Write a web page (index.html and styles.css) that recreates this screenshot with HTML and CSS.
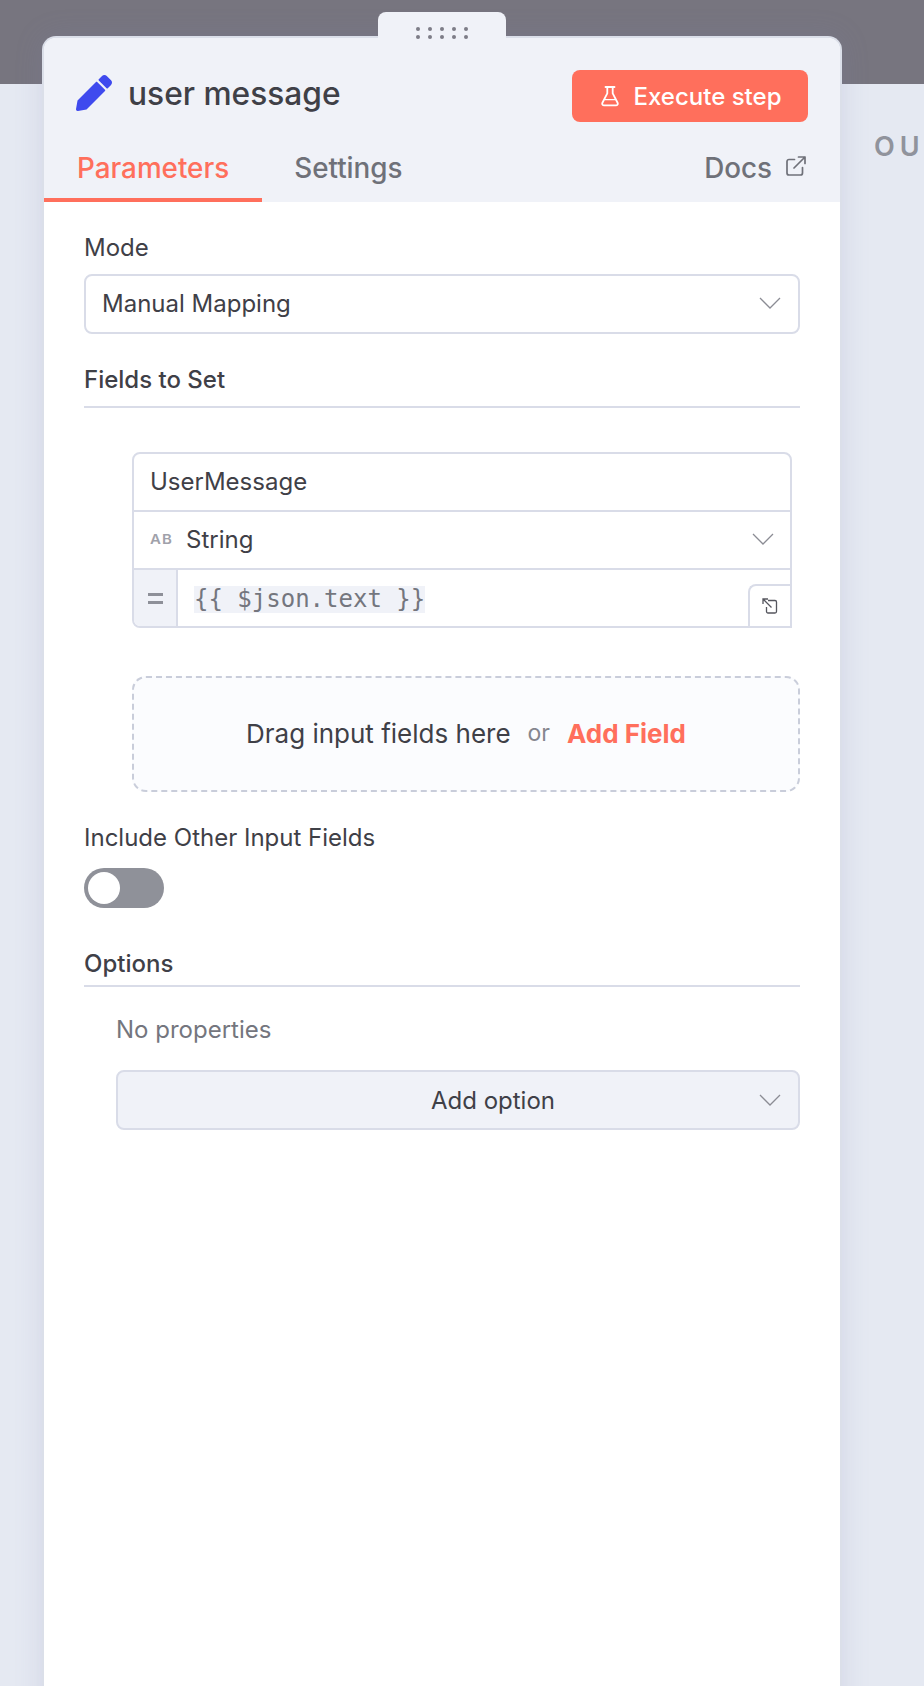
FILE: index.html
```html
<!DOCTYPE html>
<html lang="en">
<head>
<meta charset="utf-8">
<title>user message</title>
<link rel="stylesheet" href="styles.css">
</head>
<body>
<div class="scrim"></div>
<div class="stage"><span class="output-label">OU</span></div>

<section class="panel">
  <div class="handle">
    <svg class="handle-dots" width="52" height="14" viewBox="0 0 52 14"><g fill="#7d7d87"><circle cx="2" cy="3" r="2"/><circle cx="14" cy="3" r="2"/><circle cx="26" cy="3" r="2"/><circle cx="38" cy="3" r="2"/><circle cx="50" cy="3" r="2"/><circle cx="2" cy="11" r="2"/><circle cx="14" cy="11" r="2"/><circle cx="26" cy="11" r="2"/><circle cx="38" cy="11" r="2"/><circle cx="50" cy="11" r="2"/></g></svg>
  </div>
  <header class="head">
    <div class="title-row">
      <div class="title">
        <svg class="pencil" width="36" height="36" viewBox="0 0 512 512"><path fill="#3f4aee" d="M497.9 142.1l-46.1 46.1c-4.7 4.7-12.3 4.7-17 0l-111-111c-4.7-4.7-4.7-12.3 0-17l46.1-46.1c18.7-18.7 49.1-18.7 67.9 0l60.1 60.1c18.8 18.7 18.8 49.1 0 67.9zM284.2 99.8L21.6 362.4.4 483.9c-2.9 16.4 11.4 30.6 27.8 27.8l121.5-21.3 262.6-262.6c4.7-4.7 4.7-12.3 0-17l-111-111c-4.8-4.7-12.4-4.7-17.1 0z"/></svg>
        <span class="title-text">user message</span>
      </div>
      <button class="run">
        <svg width="18" height="22" viewBox="0 0 20 24" fill="none" stroke="#fff" stroke-width="2" stroke-linejoin="round" stroke-linecap="round"><path d="M5 2h10M7 2v7L1.6 19.5C.9 21 1.8 22.5 3.4 22.5h13.2c1.6 0 2.5-1.5 1.8-3L13 9V2"/><path d="M4 16h12" stroke-width="1.4"/></svg>
        <span>Execute step</span>
      </button>
    </div>
    <nav class="tabs">
      <a class="tab tab-active">Parameters</a>
      <a class="tab">Settings</a>
      <a class="docs">Docs
        <svg width="20" height="20" viewBox="0 0 20 20" fill="none" stroke="#6f7179" stroke-width="1.7" stroke-linecap="round" stroke-linejoin="round"><path d="M8.5 3.5H3a2 2 0 0 0-2 2V17a2 2 0 0 0 2 2h11.500a2 2 0 0 0 2-2v-5.500"/><path d="M8 12 19 1M12.500 1H19v6.500"/></svg>
      </a>
    </nav>
  </header>

  <div class="body">
    <label class="label">Mode</label>
    <div class="select">
      <span>Manual Mapping</span>
      <svg class="chev" width="22" height="12" viewBox="0 0 22 12"><path d="M1 1l10 10L21 1" fill="none" stroke="#8b8c94" stroke-width="1.3"/></svg>
    </div>

    <div class="section-head section-fields">Fields to Set</div>

    <div class="assign">
      <div class="assign-row">UserMessage</div>
      <div class="assign-row assign-type">
        <span class="ab">AB</span><span class="type-name">String</span>
        <svg class="chev" width="22" height="12" viewBox="0 0 22 12"><path d="M1 1l10 10L21 1" fill="none" stroke="#8b8c94" stroke-width="1.3"/></svg>
      </div>
      <div class="assign-expr">
        <div class="eq"><span class="eq-bar"></span><span class="eq-bar"></span></div>
        <div class="expr"><code class="expr-code">{{ $json.text }}</code></div>
        <div class="expand">
          <svg width="16" height="16" viewBox="0 0 16 16" fill="none" stroke="#55565e" stroke-width="1.3"><path d="M6 2.500h7a1.500 1.500 0 0 1 1.500 1.500v9.500A1.500 1.500 0 0 1 13 15H6a1.500 1.500 0 0 1-1.500-1.500V9"/><path d="M9.500 9.500 1 1M1 6V1h5"/></svg>
        </div>
      </div>
    </div>

    <div class="drop">
      <span>Drag input fields here</span><span class="or">or</span><span class="add-field">Add Field</span>
    </div>

    <label class="label label-include">Include Other Input Fields</label>
    <div class="toggle"><span class="knob"></span></div>

    <div class="section-head section-options">Options</div>
    <div class="options">
      <div class="no-props">No properties</div>
      <div class="add-option">
        <span>Add option</span>
        <svg class="chev chev-over" width="22" height="12" viewBox="0 0 22 12"><path d="M1 1l10 10L21 1" fill="none" stroke="#8b8c94" stroke-width="1.3"/></svg>
      </div>
    </div>
  </div>
</section>
</body>
</html>
```

FILE: styles.css
```css
* { box-sizing: border-box; }
html, body { margin: 0; height: 100%; }
body {
  background: #e5e9f2;
  font-family: Inter, "Liberation Sans", sans-serif;
  color: #3f4047;
  overflow: hidden;
  position: relative;
}
.scrim { height: 84px; background: #77757f; }
.stage { padding: 46px 0 0 874px; white-space: nowrap; }
.output-label {
  font-size: 27px;
  font-weight: 600;
  letter-spacing: 5px;
  line-height: 34px;
  color: #90939c;
}
.panel {
  position: absolute;
  left: 42px;
  top: 36px;
  width: 800px;
  height: 1700px;
  background: #fff;
  border: 2px solid #dbdfe9;
  border-bottom: 0;
  border-radius: 14px 14px 0 0;
  box-shadow: 0 0 28px rgba(120, 130, 170, .18);
}
.handle {
  position: absolute;
  left: 334px;
  top: -26px;
  width: 128px;
  height: 28px;
  background: #f0f2f8;
  border-radius: 8px 8px 0 0;
  display: flex;
  justify-content: center;
  padding-top: 14px;
}
.handle-dots { display: block; overflow: visible; }
.head {
  background: #f0f2f8;
  height: 164px;
  border-radius: 12px 12px 0 0;
  display: flex;
  flex-direction: column;
}
.title-row {
  display: flex;
  justify-content: space-between;
  padding: 32px 32px 0 32px;
  height: 106px;
}
.title { display: flex; align-items: center; gap: 16px; height: 46px; }
.title-text { font-size: 31.7px; font-weight: 500; color: #3f4047; }
.run {
  width: 236px;
  height: 52px;
  border: 0;
  border-radius: 8px;
  background: #ff6f5c;
  color: #fff;
  font: 500 24px Inter, sans-serif;
  display: flex;
  align-items: center;
  justify-content: center;
  gap: 15px;
  padding: 0 0 0 2px;
}
.tabs { display: flex; align-items: stretch; height: 58px; }
.tab {
  font-size: 27.8px;
  font-weight: 500;
  line-height: 34px;
  color: #6f7179;
  padding: 7px 33px 0;
  margin-right: -1px;
}
.tab-active { color: #ff6f5c; border-bottom: 4px solid #ff6f5c; }
.docs {
  margin-left: auto;
  padding: 7px 34px 0 0;
  font-size: 27.8px;
  font-weight: 500;
  line-height: 34px;
  color: #6f7179;
  display: flex;
  align-items: flex-start;
  gap: 14px;
}
.docs svg { margin-top: 5px; }
.body { padding: 30px 40px 0 40px; font-size: 24px; }
.label { display: block; line-height: 32px; color: #3f4047; }
.select {
  margin-top: 10px;
  height: 60px;
  border: 2px solid #d9dce8;
  border-radius: 8px;
  display: flex;
  align-items: center;
  justify-content: space-between;
  padding: 0 17px 2px 16px;
}
.section-head {
  font-weight: 500;
  line-height: 32px;
  border-bottom: 2px solid #d9dce8;
}
.section-fields { margin-top: 30px; height: 44px; }
.assign {
  margin: 44px 8px 0 48px;
  height: 176px;
  border: 2px solid #d9dce8;
  border-radius: 8px 8px 0 8px;
  display: flex;
  flex-direction: column;
}
.assign-row {
  height: 58px;
  border-bottom: 2px solid #d9dce8;
  display: flex;
  align-items: center;
  padding: 0 16px 2px;
}
.ab {
  font-size: 13px;
  font-weight: 600;
  letter-spacing: 1px;
  color: #a0a1aa;
  width: 36px;
  transform: scaleX(1.15);
  transform-origin: left center;
}
.type-name { flex: 1; }
.assign-expr { flex: 1; display: flex; min-height: 0; }
.eq {
  width: 44px;
  background: #f0f2f8;
  border-right: 2px solid #d9dce8;
  border-radius: 0 0 0 6px;
  display: flex;
  flex-direction: column;
  align-items: center;
  justify-content: center;
  gap: 5px;
}
.eq-bar { width: 15px; height: 3px; background: #8e9099; }
.expr { flex: 1; padding: 14px 0 0 16px; }
.expr-code {
  display: inline-block;
  background: #f0f2f8;
  font-family: "DejaVu Sans Mono", "Liberation Mono", monospace;
  font-size: 24px;
  line-height: 27px;
  color: #74767e;
}
.expand {
  width: 42px;
  height: 42px;
  margin-top: 14px;
  border: 2px solid #d9dce8;
  border-right: 0;
  border-bottom: 0;
  border-radius: 8px 0 0 0;
  display: flex;
  align-items: center;
  justify-content: center;
}
.drop {
  margin: 48px 0 0 48px;
  height: 116px;
  border: 2px dashed #c9cdda;
  border-radius: 14px;
  background: #fbfcfe;
  display: flex;
  align-items: center;
  justify-content: center;
  font-size: 26px;
  padding-bottom: 2px;
}
.or { margin: 0 17px; color: #85868e; font-size: 23px; }
.add-field { color: #ff6f5c; font-weight: 700; }
.label-include { margin-top: 30px; }
.toggle {
  margin-top: 14px;
  width: 80px;
  height: 40px;
  border-radius: 20px;
  background: #8f9199;
  padding: 4px;
}
.knob { display: block; width: 32px; height: 32px; border-radius: 50%; background: #fff; }
.section-options { margin-top: 39px; height: 40px; padding-top: 1px; }
.options { padding: 27px 0 0 32px; }
.no-props { color: #74767e; line-height: 32px; }
.add-option {
  position: relative;
  margin-top: 24px;
  height: 60px;
  background: #f0f2f8;
  border: 2px solid #d9dce8;
  border-radius: 8px;
  display: flex;
  align-items: center;
  justify-content: center;
  padding-left: 70px;
}
.chev-over { position: absolute; right: 17px; top: 22px; }
```
